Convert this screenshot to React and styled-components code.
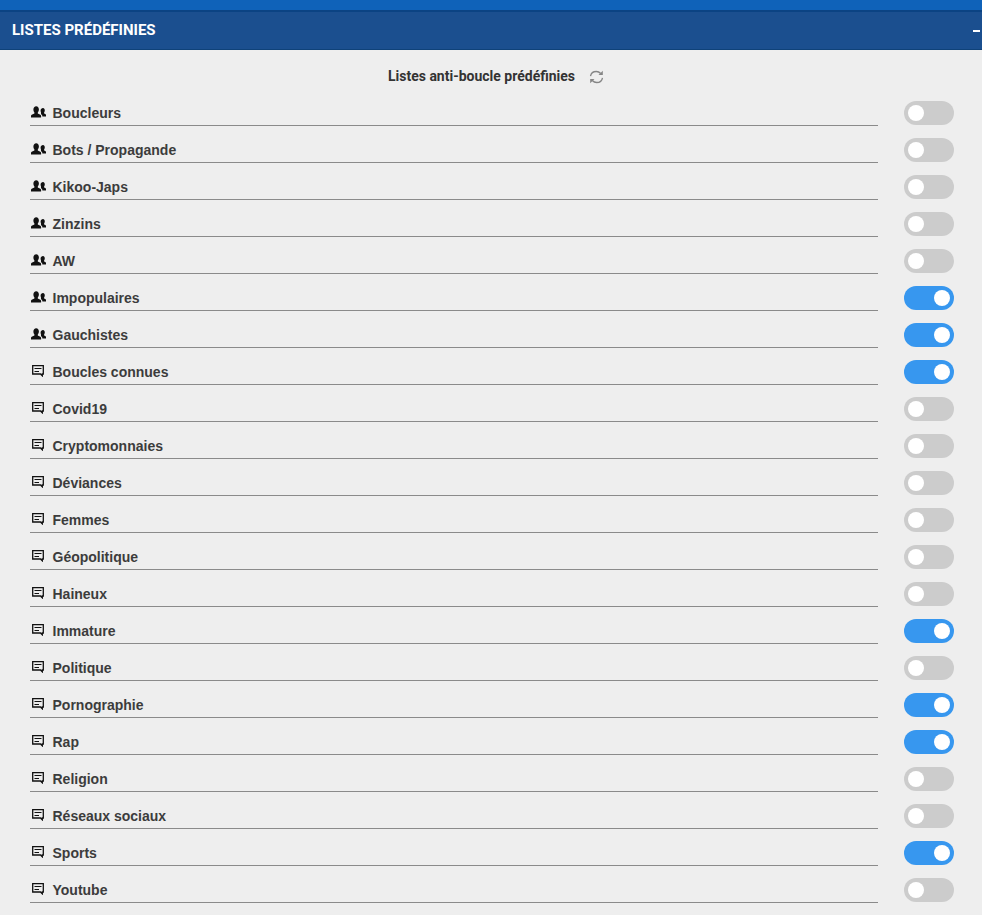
import React from 'react'
import styled, { createGlobalStyle } from 'styled-components'

const users = ['Boucleurs', 'Bots / Propagande', 'Kikoo-Japs', 'Zinzins', 'AW', 'Impopulaires', 'Gauchistes']
const topics = ['Boucles connues', 'Covid19', 'Cryptomonnaies', 'Déviances', 'Femmes', 'Géopolitique', 'Haineux', 'Immature', 'Politique', 'Pornographie', 'Rap', 'Religion', 'Réseaux sociaux', 'Sports', 'Youtube']
const enabled = ['Impopulaires', 'Gauchistes', 'Boucles connues', 'Immature', 'Pornographie', 'Rap', 'Sports']

const UsersIcon = () => (
  <Glyph $top={-2} width="15" height="12" viewBox="0 0 15 12">
    <path fill="#111" d="M5.200 0.200c1.700 0 2.700 1.400 2.700 3.300 0 1.200-.5 2.300-1.100 2.900v1.200l2.500 1.200c.5.300.8.600.8 1.200v1.500H0v-1.500c0-.6.200-.9.700-1.200l2.700-1.200V6.400C2.800 5.800 2.400 4.700 2.400 3.500c0-1.900 1.100-3.300 2.800-3.300z" />
    <path fill="#111" d="M12 2c1.100 0 1.800 1 1.800 2.300 0 .9-.3 1.600-.7 2.100v1l1.200.7c.4.200.7.500.7 1v1.400h-3.600c0-1-.3-1.700-1-2.100l-.4-.3V6.400c-.3-.5-.4-1.200-.4-2.100C9.600 3 10.800 2 12 2z" />
  </Glyph>
)

const CommentIcon = () => (
  <Glyph $top={-1} $left={1} width="12" height="12" viewBox="0 0 12 12">
    <path fill="none" stroke="#111" strokeWidth="1.300" d="M.7.700h10.600v8.300h-1v1.800L8.500 9H.7z" />
    <path stroke="#111" strokeWidth="1.100" d="M2.500 3.500h7M2.500 6.500h4.500" />
  </Glyph>
)

const RefreshIcon = () => (
  <Refresh width="15" height="14" viewBox="0 0 15 14" fill="none" stroke="#858585" strokeWidth="1.300">
    <path d="M1.500 6.200C2 3.300 4.300 1.500 7.300 1.500c1.800 0 3.300.8 4.400 2" />
    <path fill="#858585" stroke="none" d="M13.800.8v4.300H9.500z" />
    <path d="M13.500 7.800C13 10.700 10.700 12.500 7.700 12.500c-1.800 0-3.300-.8-4.400-2" />
    <path fill="#858585" stroke="none" d="M1.200 13.200V8.900h4.300z" />
  </Refresh>
)

function Row({ label, icon }) {
  const on = enabled.includes(label)
  return (
    <ListRow>
      <Label>
        <IconSlot>{icon === 'users' ? <UsersIcon /> : <CommentIcon />}</IconSlot>
        {label}
      </Label>
      <Switch $on={on} />
    </ListRow>
  )
}

export default function App() {
  return (
    <Page>
      <GlobalStyle />
      <TopBar />
      <Header>
        <span>LISTES PRÉDÉFINIES</span>
        <Collapse />
      </Header>
      <Body>
        <Heading>
          Listes anti-boucle prédéfinies
          <RefreshIcon />
        </Heading>
        {users.map((u) => <Row key={u} label={u} icon="users" />)}
        {topics.map((t) => <Row key={t} label={t} icon="comment" />)}
      </Body>
    </Page>
  )
}

const GlobalStyle = createGlobalStyle`
  html, body {
    margin: 0;
    padding: 0;
    background: #eeeeee;
  }
`

const Page = styled.div`
  width: 982px;
  height: 915px;
  overflow: hidden;
  background: #eeeeee;
  font-family: Roboto, "Liberation Sans", sans-serif;
`

const TopBar = styled.div`
  height: 10px;
  background: #0f62b9;
`

const Header = styled.div`
  height: 40px;
  box-sizing: border-box;
  border-top: 2px solid #0b4383;
  border-bottom: 1px solid #0f4279;
  background: #1b4f8f;
  color: #fff;
  display: flex;
  align-items: center;
  justify-content: space-between;
  padding: 0 2px 2px 12px;
  font-size: 15px;
  font-weight: 700;
`

const Collapse = styled.i`
  display: block;
  width: 7px;
  height: 2px;
  margin-top: 2px;
  background: #fff;
`

const Body = styled.div`
  padding: 0 28px 0 30px;
`

const Heading = styled.div`
  height: 51px;
  display: flex;
  align-items: center;
  justify-content: center;
  gap: 14px;
  padding-left: 8px;
  box-sizing: border-box;
  font-size: 14px;
  font-weight: 700;
  color: #333;
`

const Refresh = styled.svg`
  display: block;
  margin-top: 2px;
`

const ListRow = styled.div`
  height: 37px;
  display: flex;
  align-items: flex-start;
  justify-content: space-between;
`

const Label = styled.div`
  width: 848px;
  height: 25px;
  box-sizing: border-box;
  display: flex;
  align-items: center;
  padding-bottom: 1px;
  border-bottom: 1px solid #8a8a8a;
  font-family: "Liberation Sans", Arial, sans-serif;
  font-size: 14px;
  font-weight: 700;
  color: #3c3c3c;
`

const IconSlot = styled.span`
  width: 22.5px;
  display: flex;
  align-items: center;
  padding-left: 1px;
  box-sizing: border-box;
`

const Glyph = styled.svg`
  display: block;
  margin-top: ${(p) => p.$top}px;
  margin-left: ${(p) => p.$left || 0}px;
`

const Switch = styled.div`
  position: relative;
  width: 50px;
  height: 24px;
  border-radius: 12px;
  background: ${(p) => (p.$on ? '#3797ef' : '#cccccc')};

  &::before {
    content: '';
    position: absolute;
    top: 4px;
    left: ${(p) => (p.$on ? '30px' : '4px')};
    width: 16px;
    height: 16px;
    border-radius: 50%;
    background: #fff;
  }
`
